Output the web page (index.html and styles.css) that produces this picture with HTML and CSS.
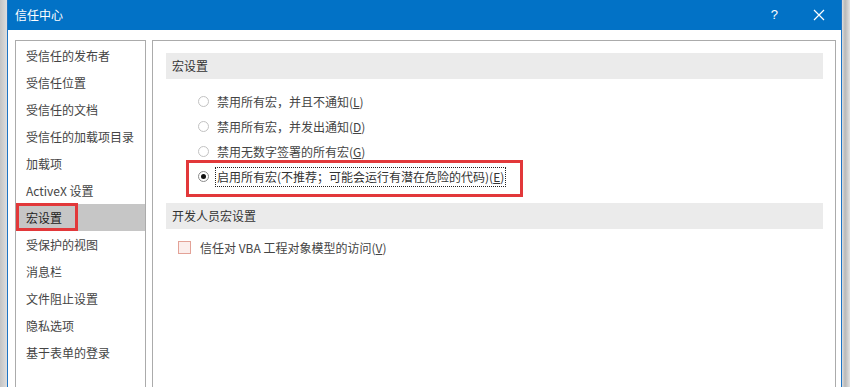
FILE: index.html
```html
<!DOCTYPE html>
<html lang="zh-CN">
<head>
<meta charset="utf-8">
<title>信任中心</title>
<link rel="stylesheet" href="styles.css">
</head>
<body>
<div class="window">
  <div class="titlebar">
    <span class="title">信任中心</span>
    <div class="controls">
      <span class="help">?</span>
      <svg class="close" width="12" height="12" viewBox="0 0 12 12"><path d="M1 1 L11 11 M11 1 L1 11" stroke="#ffffff" stroke-width="1.2" fill="none"/></svg>
    </div>
  </div>
  <div class="body">
    <nav class="sidebar">
      <div class="item">受信任的发布者</div>
      <div class="item">受信任位置</div>
      <div class="item">受信任的文档</div>
      <div class="item">受信任的加载项目录</div>
      <div class="item">加载项</div>
      <div class="item">ActiveX 设置</div>
      <div class="item selected">宏设置<span class="mark mark-side"></span></div>
      <div class="item">受保护的视图</div>
      <div class="item">消息栏</div>
      <div class="item">文件阻止设置</div>
      <div class="item">隐私选项</div>
      <div class="item">基于表单的登录</div>
    </nav>
    <main class="content">
      <div class="section-head">宏设置</div>
      <div class="options">
        <div class="row"><span class="radio"></span><span class="label">禁用所有宏，并且不通知(<u>L</u>)</span></div>
        <div class="row"><span class="radio"></span><span class="label">禁用所有宏，并发出通知(<u>D</u>)</span></div>
        <div class="row"><span class="radio"></span><span class="label">禁用无数字签署的所有宏(<u>G</u>)</span></div>
        <div class="row"><span class="radio checked"></span><span class="label focus">启用所有宏(不推荐；可能会运行有潜在危险的代码)(<u>E</u>)</span><span class="mark mark-opt"></span></div>
      </div>
      <div class="section-head second">开发人员宏设置</div>
      <div class="check-row"><span class="checkbox"></span><span class="label">信任对 VBA 工程对象模型的访问(<u>V</u>)</span></div>
    </main>
  </div>
</div>
</body>
</html>
```
FILE: styles.css
```css
html, body {
  margin: 0;
  padding: 0;
  height: 387px;
  overflow: hidden;
}
body {
  background: linear-gradient(90deg, #c4c4c4 0px, #dedede 7px, #dedede 842px, #b8b8b8 845px, #e2e2e2 850px);
  font-family: "Noto Sans CJK SC", "Noto Sans", sans-serif;
  font-size: 12px;
  color: #444;
}
.window {
  margin-left: 7px;
  width: 835px;
  height: 387px;
  box-sizing: border-box;
  border-left: 1px solid #1e74c4;
  border-right: 1px solid #1e74c4;
  background: #ffffff;
  overflow: hidden;
}
.titlebar {
  height: 30px;
  background: #0272c6;
  color: #ffffff;
  display: flex;
  align-items: center;
  justify-content: space-between;
  padding: 0 17px 0 8px;
  margin: 0 -1px;
}
.title {
  font-size: 12px;
  line-height: 30px;
}
.controls {
  display: flex;
  align-items: center;
  gap: 35px;
}
.help {
  font-family: "Liberation Sans", sans-serif;
  font-size: 13px;
  line-height: 30px;
}
.close {
  display: block;
}
.body {
  display: flex;
  gap: 6px;
  padding: 10px 5px 0 7px;
}
.sidebar {
  width: 131px;
  height: 360px;
  box-sizing: border-box;
  border: 1px solid #ababab;
  padding-top: 1px;
  flex: none;
}
.item {
  position: relative;
  height: 27px;
  line-height: 27px;
  padding-left: 10px;
  color: #444;
  white-space: nowrap;
}
.item.selected {
  background: #c6c6c6;
  color: #222;
}
.mark {
  position: absolute;
  box-sizing: border-box;
  border: 3px solid #e2383a;
  pointer-events: none;
}
.mark-side {
  left: 0;
  top: -1px;
  width: 62px;
  height: 28px;
}
.content {
  width: 684px;
  height: 360px;
  box-sizing: border-box;
  border: 1px solid #ababab;
  flex: none;
}
.section-head {
  margin: 12px 12px 0 13px;
  height: 26px;
  line-height: 26px;
  padding-left: 6px;
  background: #ebebeb;
  color: #333;
}
.section-head.second {
  margin-top: 14px;
}
.options {
  margin-top: 10px;
}
.row {
  position: relative;
  height: 25px;
  display: flex;
  align-items: center;
  padding-left: 45px;
  gap: 8px;
  white-space: nowrap;
}
.radio {
  width: 11px;
  height: 11px;
  box-sizing: border-box;
  border: 1px solid #c2c2c2;
  border-radius: 50%;
  background: #fff;
  flex: none;
  display: flex;
  align-items: center;
  justify-content: center;
}
.radio.checked {
  border-color: #8a8a8a;
}
.radio.checked::after {
  content: "";
  width: 5px;
  height: 5px;
  border-radius: 50%;
  background: #111;
}
.label {
  line-height: 18px;
}
.label.focus {
  border: 1px dotted #222;
  margin-left: -2px;
  padding: 0 1px;
  color: #333;
}
.mark-opt {
  left: 33px;
  top: -4px;
  width: 337px;
  height: 37px;
}
.check-row {
  margin-top: 6px;
  height: 25px;
  display: flex;
  align-items: center;
  padding-left: 25px;
  gap: 9px;
  white-space: nowrap;
}
.checkbox {
  width: 13px;
  height: 13px;
  box-sizing: border-box;
  border: 1px solid #e3a297;
  background: #fbeeec;
  flex: none;
}
```
